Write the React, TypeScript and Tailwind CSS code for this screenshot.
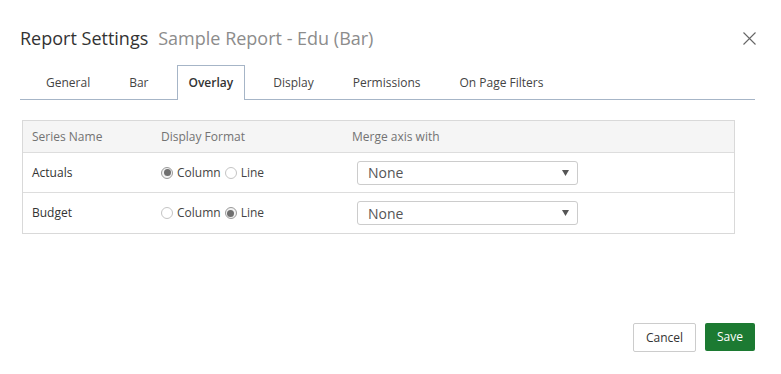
import React from "react";

const tabs = ["General", "Bar", "Overlay", "Display", "Permissions", "On Page Filters"];

const rows = [
  { name: "Actuals", format: "Column" },
  { name: "Budget", format: "Line" },
];

function Radio({ checked, label }: { checked: boolean; label: string }) {
  return (
    <span className="flex items-center gap-[4px]">
      <span
        className={`grid h-[12px] w-[12px] place-items-center rounded-full border ${
          checked ? "border-[#9a9a9a] bg-[#f2f2f2]" : "border-[#c4c4c4] bg-white"
        }`}
      >
        {checked && <span className="h-[7px] w-[7px] rounded-full bg-[#6f6f6f]" />}
      </span>
      <span>{label}</span>
    </span>
  );
}

function Select() {
  return (
    <div className="flex h-[24px] w-[221px] items-center justify-between rounded-[3px] border border-[#cccccc] bg-white pr-[8px] pl-[10px] text-[14px] text-[#555555]">
      <span>None</span>
      <svg width="7" height="6" viewBox="0 0 7 6">
        <path d="M0 0 H7 L3.5 6 Z" fill="#555555" />
      </svg>
    </div>
  );
}

export default function App() {
  return (
    <div
      className="flex h-[374px] w-[781px] flex-col bg-white pt-[26px] pr-[26px] pb-[22px] pl-[20px] text-[#333333]"
      style={{ fontFamily: '"Open Sans", "Liberation Sans", sans-serif' }}
    >
      <div className="flex h-[25px] items-center justify-between">
        <div className="flex items-baseline gap-[10px] text-[18px] leading-[25px]">
          <span className="text-[#333333]">Report Settings</span>
          <span className="text-[#8c8c8c]">Sample Report - Edu (Bar)</span>
        </div>
        <svg width="13" height="13" viewBox="0 0 13 13" className="mr-[-1px]">
          <path d="M0.5 0.5 L12.5 12.5 M12.5 0.5 L0.5 12.5" stroke="#666666" strokeWidth="1.1" />
        </svg>
      </div>

      <div className="mt-[14px] flex h-[35px] gap-[17px] border-b border-[#a6b5c7] pl-[15px] text-[12px]">
        {tabs.map((t) => (
          <div
            key={t}
            className={`-mb-px flex h-[35px] items-center px-[11px] ${
              t === "Overlay"
                ? "border border-b-0 border-[#a6b5c7] bg-white px-[10px] font-semibold text-[#333333]"
                : "text-[#444444]"
            }`}
          >
            {t}
          </div>
        ))}
      </div>

      <div className="mt-[20px] ml-[2px] w-[713px] border border-[#d9d9d9] text-[12px]">
        <div className="flex h-[32px] items-center border-b border-[#dddddd] bg-[#f5f5f5] text-[#737373]">
          <div className="w-[129px] pl-[9px]">Series Name</div>
          <div className="w-[191px] pl-[9px]">Display Format</div>
          <div className="pl-[9px]">Merge axis with</div>
        </div>
        {rows.map((r, i) => (
          <div
            key={r.name}
            className={`flex h-[40px] items-center text-[#333333] ${
              i === 0 ? "border-b border-[#dddddd]" : ""
            }`}
          >
            <div className="w-[129px] pl-[9px]">{r.name}</div>
            <div className="flex w-[191px] gap-[4px] pl-[9px] text-[#444444]">
              <Radio checked={r.format === "Column"} label="Column" />
              <Radio checked={r.format === "Line"} label="Line" />
            </div>
            <div className="pl-[14px]">
              <Select />
            </div>
          </div>
        ))}
      </div>

      <div className="mt-auto flex justify-end gap-[9px] text-[12px]">
        <button className="h-[29px] w-[63px] rounded-[2px] border border-[#cccccc] bg-white text-[#333333]">
          Cancel
        </button>
        <button className="h-[28px] w-[50px] rounded-[2px] bg-[#1c7a32] text-white">Save</button>
      </div>
    </div>
  );
}
